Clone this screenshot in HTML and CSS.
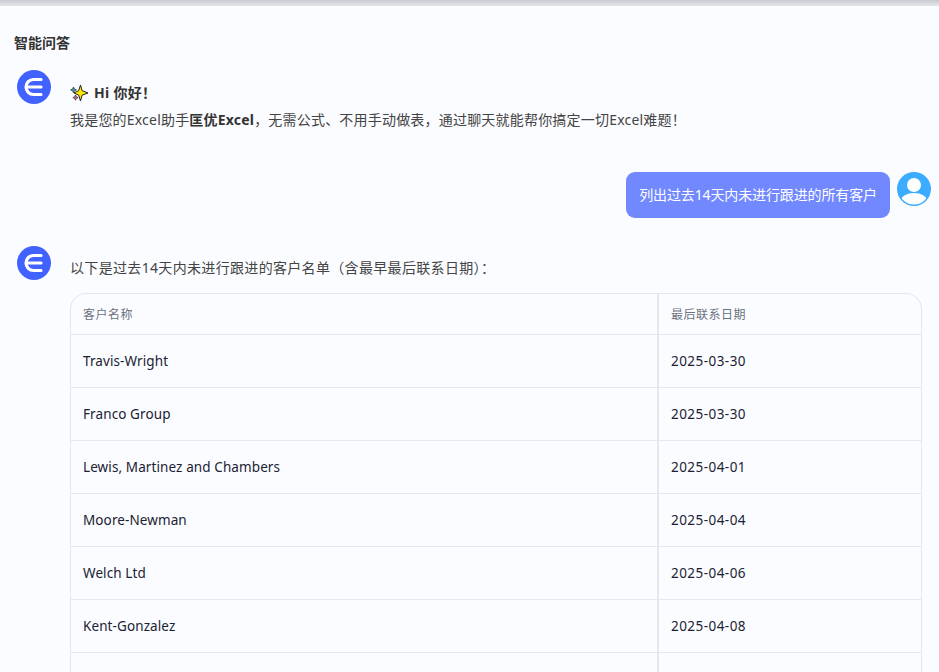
FILE: index.html
```html
<!DOCTYPE html>
<html lang="zh-CN">
<head>
<meta charset="utf-8">
<title>智能问答</title>
<link rel="stylesheet" href="styles.css">
</head>
<body>
<div class="topbar"></div>
<main class="page">
  <h1 class="title">智能问答</h1>
  <section class="msg">
    <svg class="avatar" viewBox="0 0 34 34"><circle cx="17" cy="17" r="17" fill="#4162ff"/><path d="M24 9.500H16.500a7.500 7.500 0 0 0 0 15H24M10.500 17H24" fill="none" stroke="#fff" stroke-width="3.2" stroke-linecap="round"/></svg>
    <div class="body hello">
      <p class="hi"><svg class="spark" viewBox="0 0 18 18"><path d="M10.500 1l1.600 5.600L18 9l-5.900 2.200L10.500 17l-1.800-5.800L4 9l4.700-2.400z" fill="#ffe600" stroke="#222" stroke-width="1"/><path d="M3.500 3l.9 2 2 .9-2 .9-.9 2-.9-2-2-.9 2-.9z" fill="#3aa6b8" stroke="#222" stroke-width=".7"/><path d="M5.500 11l.8 1.800 1.800.8-1.800.8-.8 1.800-.8-1.800-1.800-.8 1.800-.8z" fill="#e06fa8" stroke="#222" stroke-width=".7"/></svg><b>Hi 你好！</b></p>
      <p class="intro">我是您的Excel助手<b>匡优Excel</b>，无需公式、不用手动做表，通过聊天就能帮你搞定一切Excel难题！</p>
    </div>
  </section>
  <section class="user">
    <div class="bubble">列出过去14天内未进行跟进的所有客户</div>
    <svg class="avatar" viewBox="0 0 34 34"><defs><clipPath id="c"><circle cx="17" cy="17" r="15.500"/></clipPath></defs><circle cx="17" cy="17" r="17" fill="#3bacff"/><g clip-path="url(#c)"><circle cx="17" cy="13" r="7" fill="#fff"/><ellipse cx="17" cy="29" rx="13" ry="8" fill="#fff"/></g></svg>
  </section>
  <section class="msg answer">
    <svg class="avatar" viewBox="0 0 34 34"><circle cx="17" cy="17" r="17" fill="#4162ff"/><path d="M24 9.500H16.500a7.500 7.500 0 0 0 0 15H24M10.500 17H24" fill="none" stroke="#fff" stroke-width="3.2" stroke-linecap="round"/></svg>
    <div class="body">
      <p class="lead">以下是过去14天内未进行跟进的客户名单（含最早最后联系日期）：</p>
      <div class="table-wrap">
        <table>
          <thead><tr><th class="c1">客户名称</th><th>最后联系日期</th></tr></thead>
          <tbody>
            <tr><td class="c1">Travis-Wright</td><td class="date">2025-03-30</td></tr>
            <tr><td class="c1">Franco Group</td><td class="date">2025-03-30</td></tr>
            <tr><td class="c1">Lewis, Martinez and Chambers</td><td class="date">2025-04-01</td></tr>
            <tr><td class="c1">Moore-Newman</td><td class="date">2025-04-04</td></tr>
            <tr><td class="c1">Welch Ltd</td><td class="date">2025-04-06</td></tr>
            <tr><td class="c1">Kent-Gonzalez</td><td class="date">2025-04-08</td></tr>
            <tr><td class="c1">&nbsp;</td><td class="date">&nbsp;</td></tr>
          </tbody>
        </table>
      </div>
    </div>
  </section>
</main>
</body>
</html>
```
FILE: styles.css
```css
html, body {
  margin: 0;
  height: 672px;
  overflow: hidden;
  background: #fbfcff;
  font-family: "Noto Sans", "Noto Sans CJK SC", sans-serif;
  color: #333;
}
p, h1 { margin: 0; }
.topbar {
  height: 6px;
  background: linear-gradient(#c9c9d2, #e6e6ec);
}
.page { padding: 0 8px 0 14px; }
.title {
  font-size: 14px;
  font-weight: 700;
  line-height: 20px;
  padding-top: 27px;
  color: #333;
}
.msg {
  display: flex;
  margin-top: 17px;
  padding-left: 3px;
}
.avatar {
  width: 34px;
  height: 34px;
  flex: none;
  display: block;
}
.body {
  margin-left: 19px;
  flex: 1;
  min-width: 0;
  font-size: 14px;
}
.hello { padding-top: 13px; }
.hi {
  display: flex;
  align-items: center;
  height: 20px;
  line-height: 20px;
  letter-spacing: .3px;
}
.spark {
  width: 18px;
  height: 18px;
  margin-right: 6px;
}
.intro {
  line-height: 20px;
  margin-top: 7px;
  color: #444;
  letter-spacing: .2px;
}
.intro b { color: #333; }
.user {
  display: flex;
  justify-content: flex-end;
  margin-top: 42px;
  gap: 7px;
}
.bubble {
  background: #7288ff;
  color: #fff;
  font-size: 14px;
  line-height: 20px;
  padding: 13px;
  border-radius: 9px;
  height: 20px;
  letter-spacing: -.12px;
}
.answer {
  margin-top: 28px;
  margin-right: 9px;
}
.lead {
  line-height: 20px;
  padding-top: 12px;
  color: #444;
  letter-spacing: .33px;
}
.table-wrap {
  margin-top: 15px;
  border: 1px solid #e5e7eb;
  border-radius: 16px 16px 0 0;
  border-bottom: 0;
  overflow: hidden;
}
table {
  width: 100%;
  border-collapse: collapse;
  table-layout: fixed;
}
th, td {
  text-align: left;
  padding: 0 12px;
  border-bottom: 1px solid #e5e7eb;
}
th {
  font-size: 12px;
  font-weight: 400;
  color: #6b7280;
  height: 40px;
  letter-spacing: .5px;
}
td {
  font-size: 13.5px;
  letter-spacing: .1px;
  color: #1a2233;
  height: 52px;
}
.date { letter-spacing: .45px; }
.c1 {
  width: 562px;
  border-right: 2px solid #e5e7eb;
}
```
